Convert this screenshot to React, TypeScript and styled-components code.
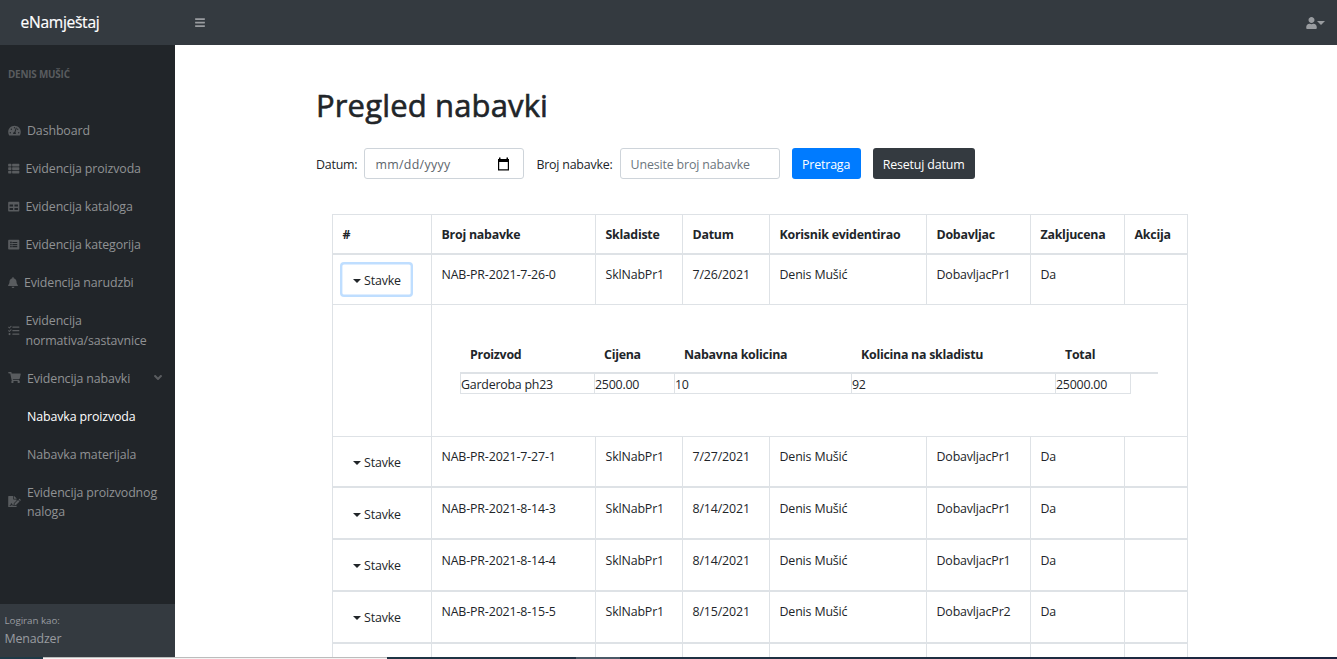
import React from 'react';
import styled, { createGlobalStyle } from 'styled-components';
import {
  FaAngleDown, FaBars, FaBell, FaFileSignature, FaListAlt, FaShoppingCart,
  FaTable, FaTachometerAlt, FaTasks, FaThList, FaUser,
} from 'react-icons/fa';
import type { IconType } from 'react-icons';

const GlobalStyle = createGlobalStyle`
  *, *::before, *::after { box-sizing: border-box; }
  html, body { margin: 0; overflow: hidden; }
  body {
    font-family: "Open Sans", "Noto Sans", sans-serif;
    font-size: 12.4px;
    line-height: 19.2px;
    letter-spacing: -0.15px;
    color: #212529;
    background: #fff;
  }
  button, input { font: inherit; letter-spacing: inherit; }
`;

const Page = styled.div`
  height: 659px;
  display: grid;
  grid-template: 45px 612px 2px / 175px 1fr;
  overflow: hidden;
`;

const TopBar = styled.header`
  grid-column: 1 / -1;
  display: flex;
  align-items: center;
  padding: 0 12px 0 20px;
  background: #343a40;
  color: #999ca0;
`;

const Brand = styled.div`
  width: 175px;
  padding-left: 0.5px;
  font-size: 15.6px;
  letter-spacing: -0.3px;
  color: #fff;
  -webkit-text-stroke: 0.2px #fff;
`;

const UserMenu = styled.div`
  display: flex;
  align-items: center;
  margin-left: auto;
`;

const Glyph = styled.span<{ $w: number; $h?: number }>`
  display: flex;
  flex: none;
  svg {
    width: ${(p) => p.$w}px;
    height: ${(p) => p.$h ?? 11.2}px;
  }
`;

const Caret = styled.span`
  flex: none;
  border-top: 4px solid currentColor;
  border-left: 4px solid transparent;
  border-right: 4px solid transparent;
`;

const Sidebar = styled.nav`
  display: flex;
  flex-direction: column;
  background: #212529;
  color: #909294;
`;

const SideHeading = styled.div`
  padding: 20px 8px 27.3px;
  font-size: 9.9px;
  font-weight: 700;
  letter-spacing: -0.2px;
  color: #595c5f;
`;

const SideItem = styled.a<{ $nested?: boolean; $active?: boolean }>`
  display: flex;
  align-items: center;
  gap: 6px;
  padding: 9.5px 8px 9.4px ${(p) => (p.$nested ? 27 : 8)}px;
  white-space: pre-line;
  letter-spacing: -0.12px;
  color: ${(p) => (p.$active ? '#fff' : 'inherit')};
  ${Glyph} { color: #595c5f; padding-bottom: 1px; }
`;

const Chevron = styled(Glyph)`
  margin-left: auto;
  margin-right: 4px;
`;

const SideFooter = styled.div`
  height: 53px;
  margin-top: auto;
  padding: 8px 4.5px;
  background: #343a40;
  color: #999ca0;
  line-height: 18px;
  small { display: block; font-size: 9.8px; letter-spacing: -0.05px; }
`;

const Main = styled.main`
  padding: 41px 0 0 141px;
  overflow: hidden;
`;

const Title = styled.h1`
  margin: 0;
  font-size: 31px;
  line-height: 38px;
  font-weight: 500;
  letter-spacing: 0.15px;
  -webkit-text-stroke: 0.6px #212529;
`;

const Filters = styled.form`
  display: flex;
  align-items: center;
  margin: 24px 0 35px;
`;

const Field = styled.label`
  display: flex;
  align-items: center;
  gap: 7px;
  margin-right: 12px;
`;

const FieldName = styled.span`
  padding-top: 2px;
  letter-spacing: -0.2px;
`;

const Control = styled.span`
  display: flex;
  align-items: center;
  justify-content: space-between;
  width: 160px;
  height: 31px;
  padding: 0 13px 0 10px;
  border: 1px solid #ced4da;
  border-radius: 3px;
  color: #6c757d;
`;

const Hint = styled.span<{ $date?: boolean }>`
  padding-top: 2px;
  letter-spacing: ${(p) => (p.$date ? '0.3px' : '-0.15px')};
  color: ${(p) => (p.$date ? '#5d646b' : '#6c757d')};
`;

const Action = styled.button<{ $bg: string; $w: number }>`
  width: ${(p) => p.$w}px;
  height: 31px;
  margin: 0 12px 0 0;
  padding: 2px 0 0;
  border: 0;
  border-radius: 3px;
  background: ${(p) => p.$bg};
  color: #fff;
`;

const Table = styled.div`
  width: 856px;
  margin-left: 16px;
  border: solid #dee2e6;
  border-width: 1px 0 0 1px;
`;

const Cell = styled.div<{ $span?: number }>`
  grid-column: span ${(p) => p.$span ?? 1};
  padding: 10px 0 0 9.5px;
  border-right: 1px solid #dee2e6;
  white-space: nowrap;
`;

const Row = styled.div<{ $h: number; $line?: number; $pad?: number }>`
  display: grid;
  grid-template-columns: 99px 164px 87px 87px 157px 104px 94px 63px;
  height: ${(p) => p.$h}px;
  border-bottom: ${(p) => p.$line ?? 2}px solid #dee2e6;
  ${Cell} { padding-top: ${(p) => p.$pad ?? 10}px; }
`;

const HeadCell = styled(Cell)`
  font-weight: 700;
  letter-spacing: -0.24px;
`;

const ToggleCell = styled.div<{ $drop: number }>`
  padding: ${(p) => 7 + p.$drop}px 0 0 7px;
  border-right: 1px solid #dee2e6;
`;

const Toggle = styled.button<{ $focused?: boolean }>`
  display: flex;
  align-items: center;
  gap: 3px;
  width: 73px;
  height: 35px;
  padding: 2px 0 0 13px;
  border: 0;
  border-radius: 4px;
  background: #fff;
  color: inherit;
  box-shadow: ${(p) => (p.$focused ? 'inset 0 0 0 2.4px #bfdeff' : 'none')};
`;

const Details = styled.div`
  width: 698px;
  margin: 30px 0 0 18.5px;
`;

const DetailRow = styled.div`
  display: grid;
  grid-template-columns: 134px 80px 177px 204px 75px;
`;

const DetailHead = styled(DetailRow)`
  height: 29px;
  padding-left: 1px;
  border-bottom: 2px solid #dee2e6;
  font-weight: 700;
  letter-spacing: -0.26px;
  span { padding-left: 9px; }
`;

const DetailBody = styled(DetailRow)`
  width: 671px;
  height: 20px;
  border-left: 1px solid #dee2e6;
  border-bottom: 1px solid #dee2e6;
  line-height: 22px;
  letter-spacing: -0.22px;
  span { height: 19px; border-right: 1px solid #dee2e6; }
`;

const Taskbar = styled.footer`
  grid-column: 1 / -1;
  display: flex;
  background: linear-gradient(90deg, #1f3a47, #1f2f42 70%, #1c2540);
`;

const StatusStrip = styled.div`
  width: 344px;
  margin-left: 43px;
  border-top: 1px solid #bcbcbc;
  background: #f4f4f4;
`;

const TaskButton = styled.div`
  width: 44px;
  margin-left: 189px;
  background: #4b5a68;
`;

interface NavEntry {
  label: string;
  icon?: IconType;
  w?: number;
  active?: boolean;
  open?: boolean;
}

const nav: NavEntry[] = [
  { label: 'Dashboard', icon: FaTachometerAlt, w: 13 },
  { label: 'Evidencija proizvoda', icon: FaThList, w: 11.5 },
  { label: 'Evidencija kataloga', icon: FaTable, w: 11.5 },
  { label: 'Evidencija kategorija', icon: FaListAlt, w: 11.5 },
  { label: 'Evidencija narudzbi', icon: FaBell, w: 10 },
  { label: 'Evidencija\nnormativa/sastavnice', icon: FaTasks, w: 11.5 },
  { label: 'Evidencija nabavki', icon: FaShoppingCart, w: 13, open: true },
  { label: 'Nabavka proizvoda', active: true },
  { label: 'Nabavka materijala' },
  { label: 'Evidencija proizvodnog\nnaloga', icon: FaFileSignature, w: 13 },
];

const columns = ['#', 'Broj nabavke', 'Skladiste', 'Datum', 'Korisnik evidentirao', 'Dobavljac', 'Zakljucena', 'Akcija'];

interface Purchase {
  no: string;
  date: string;
  supplier: string;
  height: number;
  pad?: number;
  drop?: number;
  expanded?: boolean;
}

const purchases: Purchase[] = [
  { no: 'NAB-PR-2021-7-26-0', date: '7/26/2021', supplier: 'DobavljacPr1', height: 50, expanded: true },
  { no: 'NAB-PR-2021-7-27-1', date: '7/27/2021', supplier: 'DobavljacPr1', height: 51 },
  { no: 'NAB-PR-2021-8-14-3', date: '8/14/2021', supplier: 'DobavljacPr1', height: 52, pad: 11, drop: 1 },
  { no: 'NAB-PR-2021-8-14-4', date: '8/14/2021', supplier: 'DobavljacPr1', height: 52, pad: 11 },
  { no: 'NAB-PR-2021-8-15-5', date: '8/15/2021', supplier: 'DobavljacPr2', height: 52 },
];

const detailColumns = ['Proizvod', 'Cijena', 'Nabavna kolicina', 'Kolicina na skladistu', 'Total'];
const detailValues = ['Garderoba ph23', '2500.00', '10', '92', '25000.00'];

const CalendarIcon = () => (
  <svg width="13" height="14" viewBox="0 0 13 14" fill="#000">
    <path d="M1 2h1V0.5h1.5V2h6V0.5H11V2h1v11.5H1V2Zm1.2 3v7.3h8.6V5H2.2Z" fillRule="evenodd" />
  </svg>
);

const PurchaseRow = ({ item }: { item: Purchase }) => (
  <>
    <Row $h={item.height} $line={item.expanded ? 1 : 2} $pad={item.pad}>
      <ToggleCell $drop={item.drop ?? 0}>
        <Toggle $focused={item.expanded}><Caret />Stavke</Toggle>
      </ToggleCell>
      <Cell>{item.no}</Cell>
      <Cell>SklNabPr1</Cell>
      <Cell>{item.date}</Cell>
      <Cell>Denis Mušić</Cell>
      <Cell>{item.supplier}</Cell>
      <Cell>Da</Cell>
      <Cell />
    </Row>
    {item.expanded && (
      <Row $h={132} $line={1}>
        <Cell />
        <Cell $span={7}>
          <Details>
            <DetailHead>{detailColumns.map((c) => <span key={c}>{c}</span>)}</DetailHead>
            <DetailBody>{detailValues.map((v) => <span key={v}>{v}</span>)}</DetailBody>
          </Details>
        </Cell>
      </Row>
    )}
  </>
);

export default function App() {
  return (
    <Page>
      <GlobalStyle />
      <TopBar>
        <Brand>eNamještaj</Brand>
        <Glyph $w={10} $h={11.2}><FaBars /></Glyph>
        <UserMenu>
          <Glyph $w={11} $h={12}><FaUser /></Glyph>
          <Caret />
        </UserMenu>
      </TopBar>
      <Sidebar>
        <SideHeading>DENIS MUŠIĆ</SideHeading>
        {nav.map(({ label, icon: Icon, w, active, open }) => (
          <SideItem key={label} $nested={!Icon} $active={active}>
            {Icon && <Glyph $w={w ?? 11.5}><Icon /></Glyph>}
            <span>{label}</span>
            {open && <Chevron $w={10} $h={13}><FaAngleDown /></Chevron>}
          </SideItem>
        ))}
        <SideFooter>
          <small>Logiran kao:</small>
          Menadzer
        </SideFooter>
      </Sidebar>
      <Main>
        <Title>Pregled nabavki</Title>
        <Filters onSubmit={(e) => e.preventDefault()}>
          <Field>
            <FieldName>Datum:</FieldName>
            <Control><Hint $date>mm/dd/yyyy</Hint><CalendarIcon /></Control>
          </Field>
          <Field>
            <FieldName>Broj nabavke:</FieldName>
            <Control><Hint>Unesite broj nabavke</Hint></Control>
          </Field>
          <Action type="button" $bg="#007bff" $w={69}>Pretraga</Action>
          <Action type="button" $bg="#343a40" $w={102}>Resetuj datum</Action>
        </Filters>
        <Table>
          <Row $h={40}>{columns.map((c) => <HeadCell key={c}>{c}</HeadCell>)}</Row>
          {purchases.map((p) => <PurchaseRow key={p.no} item={p} />)}
          <Row $h={52}>{columns.map((c) => <Cell key={c} />)}</Row>
        </Table>
      </Main>
      <Taskbar>
        <StatusStrip />
        <TaskButton />
      </Taskbar>
    </Page>
  );
}
